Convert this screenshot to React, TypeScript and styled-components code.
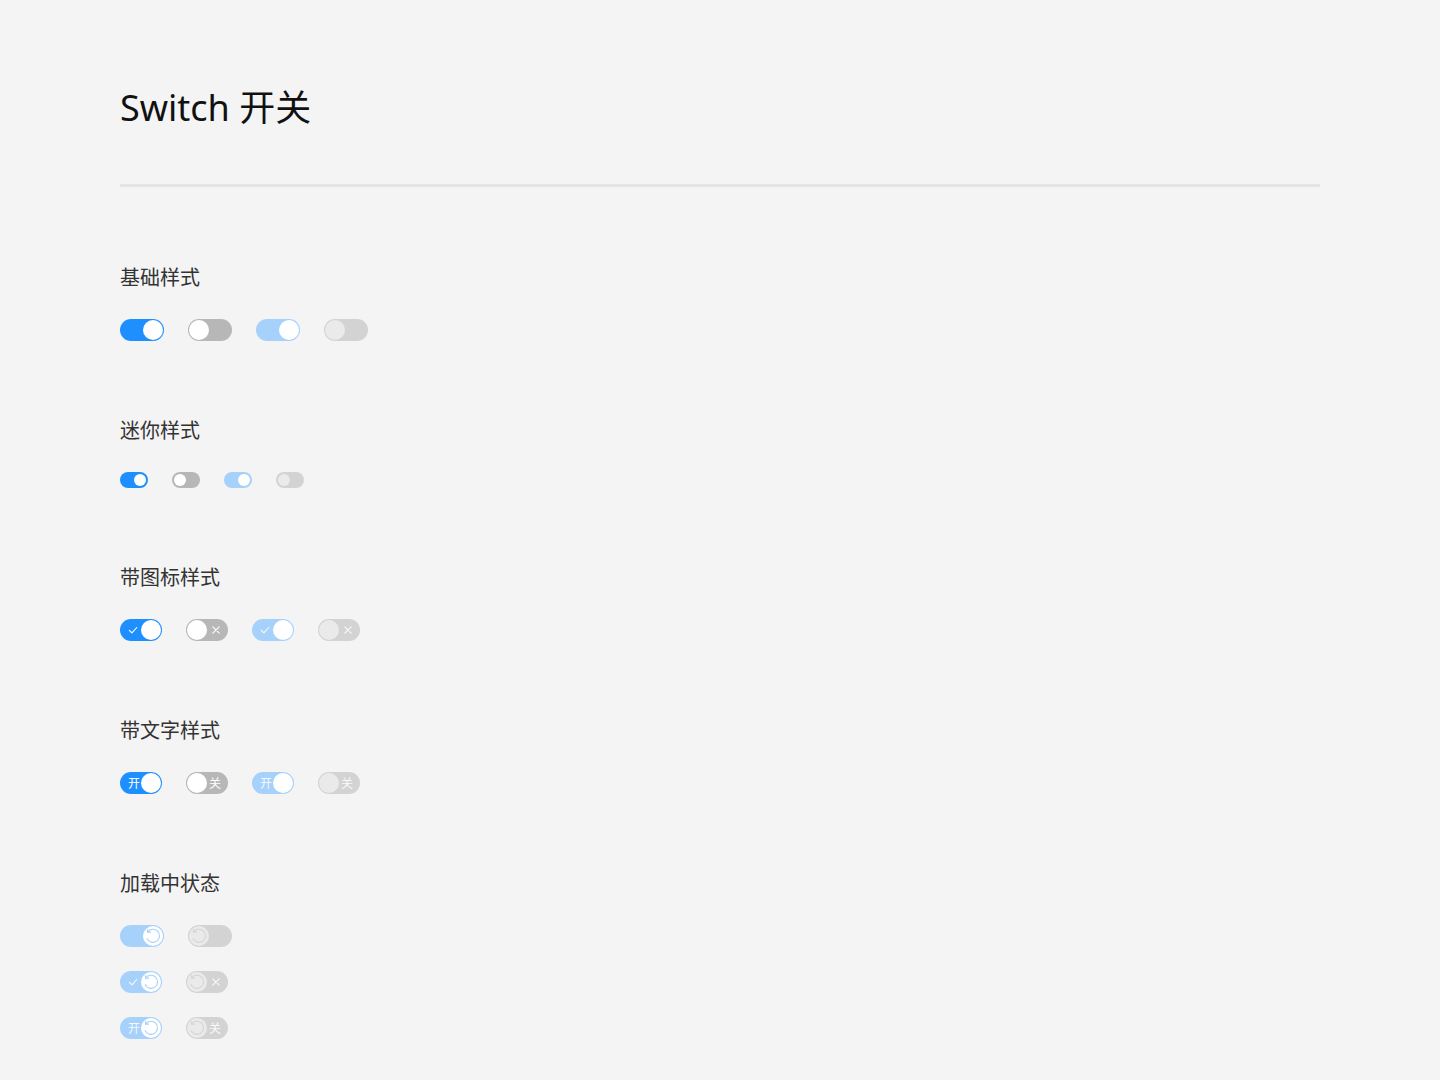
import React from "react";
import styled, { createGlobalStyle, css } from "styled-components";

const GlobalStyle = createGlobalStyle`
  html, body {
    margin: 0;
    padding: 0;
    background: #f4f4f4;
  }
  body {
    font-family: "Noto Sans", "Noto Sans CJK SC", sans-serif;
    color: #333;
  }
`;

const BLUE = "#1e8fff";
const GRAY = "#b7b7b7";
const BLUE_DIS = "#a6d1fb";
const GRAY_DIS = "#d3d3d3";

const Page = styled.div`
  padding: 83px 120px 40px;
  width: 1200px;
`;

const Title = styled.h1`
  margin: 0;
  font-size: 36px;
  line-height: 50px;
  font-weight: 400;
  color: #111;
  font-family: "Noto Sans", "Noto Sans CJK SC", sans-serif;
`;

const Divider = styled.div`
  margin-top: 51px;
  height: 3px;
  background: #e4e4e4;
`;

const Sections = styled.div`
  display: flex;
  flex-direction: column;
  gap: 75px;
  margin-top: 76px;
`;

const Section = styled.section`
  display: flex;
  flex-direction: column;
  gap: 28px;
`;

const Heading = styled.h2`
  margin: 0;
  font-size: 20px;
  line-height: 28px;
  font-weight: 400;
  color: #333;
  font-family: "Noto Sans CJK SC", sans-serif;
`;

const Rows = styled.div`
  display: flex;
  flex-direction: column;
  gap: 24px;
`;

const Row = styled.div`
  display: flex;
  gap: 24px;
  align-items: center;
`;

type Kind = "plain" | "icon" | "text";

const Track = styled.span<{ $on: boolean; $dis: boolean; $mini: boolean; $w: number }>`
  position: relative;
  display: inline-flex;
  align-items: center;
  box-sizing: border-box;
  width: ${(p) => p.$w}px;
  height: ${(p) => (p.$mini ? 16 : 22)}px;
  border-radius: 999px;
  background: ${(p) =>
    p.$on ? (p.$dis ? BLUE_DIS : BLUE) : p.$dis ? GRAY_DIS : GRAY};
  flex: none;
`;

const Thumb = styled.span<{ $on: boolean; $dis: boolean; $mini: boolean }>`
  position: absolute;
  top: ${(p) => (p.$mini ? 2 : 1)}px;
  ${(p) =>
    p.$on
      ? css`right: ${p.$mini ? 2 : 1}px;`
      : css`left: ${p.$mini ? 2 : 1}px;`}
  width: ${(p) => (p.$mini ? 12 : 20)}px;
  height: ${(p) => (p.$mini ? 12 : 20)}px;
  border-radius: 50%;
  background: ${(p) => (p.$dis && !p.$on ? "#eaeaea" : "#fff")};
  display: flex;
  align-items: center;
  justify-content: center;
`;

const Label = styled.span<{ $on: boolean; $dis: boolean }>`
  position: absolute;
  top: 0;
  bottom: 0;
  ${(p) => (p.$on ? css`left: 8px;` : css`right: 7px;`)}
  display: flex;
  align-items: center;
  color: ${(p) => (p.$dis ? "rgba(255,255,255,0.9)" : "#fff")};
  font-size: 12px;
  line-height: 1;
  font-family: "Noto Sans CJK SC", sans-serif;
`;

const CheckIcon = () => (
  <svg width="10" height="10" viewBox="0 0 10 10" fill="none">
    <path d="M1.3 5.3 L3.9 7.8 L8.8 2.5" stroke="currentColor" strokeWidth="1.1" strokeLinecap="round" strokeLinejoin="round" />
  </svg>
);

const CrossIcon = () => (
  <svg width="10" height="10" viewBox="0 0 10 10" fill="none">
    <path d="M1.8 1.8 L8.2 8.2 M8.2 1.8 L1.8 8.2" stroke="currentColor" strokeWidth="1.1" strokeLinecap="round" />
  </svg>
);

const LoadingIcon = ({ color }: { color: string }) => (
  <svg width="18" height="18" viewBox="0 0 16 16" fill="none">
    <path
      d="M2.8 10.4 A5.8 5.8 0 1 0 3.3 4.4"
      stroke={color}
      strokeWidth="1"
      strokeLinecap="round"
    />
    <path d="M3.1 2.3 L3.2 4.7 L5.7 4.6" stroke={color} strokeWidth="1" strokeLinecap="round" strokeLinejoin="round" />
  </svg>
);

type SwitchProps = {
  on: boolean;
  disabled?: boolean;
  mini?: boolean;
  kind?: Kind;
  loading?: boolean;
};

const Switch = ({ on, disabled = false, mini = false, kind = "plain", loading = false }: SwitchProps) => {
  const w = mini ? 28 : kind === "plain" ? 44 : 42;
  const trackColor = on ? (disabled ? BLUE_DIS : BLUE) : disabled ? GRAY_DIS : GRAY;
  return (
    <Track $on={on} $dis={disabled} $mini={mini} $w={w} role="switch" aria-checked={on}>
      {kind !== "plain" && (
        <Label $on={on} $dis={disabled}>
          {kind === "icon" ? (on ? <CheckIcon /> : <CrossIcon />) : on ? "开" : "关"}
        </Label>
      )}
      <Thumb $on={on} $dis={disabled} $mini={mini}>
        {loading && <LoadingIcon color={on ? trackColor : "#d4d4d4"} />}
      </Thumb>
    </Track>
  );
};

const states: [boolean, boolean][] = [
  [true, false],
  [false, false],
  [true, true],
  [false, true],
];

export default function App() {
  return (
    <>
      <GlobalStyle />
      <Page>
        <Title>Switch 开关</Title>
        <Divider />
        <Sections>
          <Section>
            <Heading>基础样式</Heading>
            <Row>
              {states.map(([on, dis], i) => (
                <Switch key={i} on={on} disabled={dis} />
              ))}
            </Row>
          </Section>
          <Section>
            <Heading>迷你样式</Heading>
            <Row>
              {states.map(([on, dis], i) => (
                <Switch key={i} on={on} disabled={dis} mini />
              ))}
            </Row>
          </Section>
          <Section>
            <Heading>带图标样式</Heading>
            <Row>
              {states.map(([on, dis], i) => (
                <Switch key={i} on={on} disabled={dis} kind="icon" />
              ))}
            </Row>
          </Section>
          <Section>
            <Heading>带文字样式</Heading>
            <Row>
              {states.map(([on, dis], i) => (
                <Switch key={i} on={on} disabled={dis} kind="text" />
              ))}
            </Row>
          </Section>
          <Section>
            <Heading>加载中状态</Heading>
            <Rows>
              <Row>
                <Switch on disabled loading />
                <Switch on={false} disabled loading />
              </Row>
              <Row>
                <Switch on disabled loading kind="icon" />
                <Switch on={false} disabled loading kind="icon" />
              </Row>
              <Row>
                <Switch on disabled loading kind="text" />
                <Switch on={false} disabled loading kind="text" />
              </Row>
            </Rows>
          </Section>
        </Sections>
      </Page>
    </>
  );
}
